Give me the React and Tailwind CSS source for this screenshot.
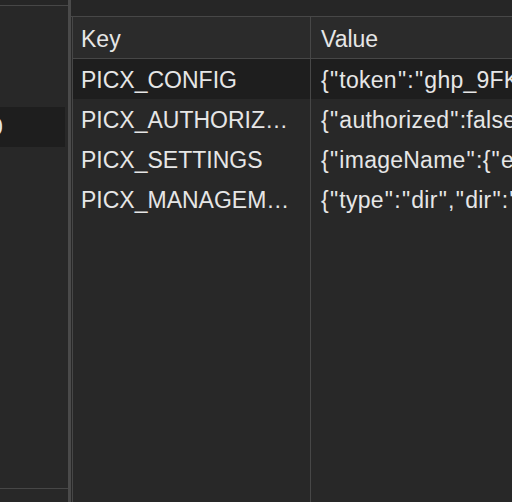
const rows = [
  { key: 'PICX_CONFIG', value: '{"token":"ghp_9FKx2mQ7cLrT0","owner":"user","repo":"picx-images"}', active: true },
  { key: 'PICX_AUTHORIZATION', value: '{"authorized":false,"token":""}' },
  { key: 'PICX_SETTINGS', value: '{"imageName":{"enableHash":true,"addPrefix":false}}' },
  { key: 'PICX_MANAGEMENT', value: '{"type":"dir","dir":"/","list":[]}' },
];

// quotes render a little wider in the original font
const JsonText = ({ text }) =>
  text.split('"').map((part, i) => (
    <span key={i}>
      {i > 0 && <span className="mx-[1px]">"</span>}
      {part}
    </span>
  ));

const App = () => {
  return (
    <div className="w-[512px] h-[502px] flex overflow-hidden bg-[#282828] text-[#e6e6e6] text-[23px] font-['Liberation_Sans',Arial,sans-serif]">
      {/* storage sidebar */}
      <div className="w-[68px] shrink-0 flex flex-col">
        <div className="h-[6px] border-b border-[#474747] bg-[#262626]" />
        <div className="mt-[101px] h-[40px] w-[65px] bg-[#1e1e1e] flex items-center overflow-hidden whitespace-nowrap">
          <span className="-ml-[10px]">0</span>
        </div>
        <div className="flex-1" />
        <div className="h-[14px] border-t border-[#474747]" />
      </div>

      <div className="w-[3px] shrink-0 bg-[#4a4a4a]" />

      {/* key / value table */}
      <div className="flex-1 min-w-0 flex flex-col">
        <div className="h-[17px] shrink-0 border-b border-[#474747] bg-[#262626]" />
        <div className="flex-1 pl-[1px] min-h-0">
          <div className="w-[760px] h-full border-l border-[#474747] flex flex-col">
            <div className="h-[42px] shrink-0 flex border-b border-[#474747] bg-[#2b2b2b]">
              <div className="w-[238px] shrink-0 border-r border-[#474747] pl-[8px] pt-[3px] flex items-center">Key</div>
              <div className="flex-1 pl-[10px] pt-[3px] flex items-center">Value</div>
            </div>
            {rows.map((row) => (
              <div key={row.key} className={`h-[40px] shrink-0 flex ${row.active ? 'bg-[#1e1e1e]' : ''}`}>
                <div className="w-[238px] shrink-0 border-r border-[#474747] pl-[8px] pr-[10px] pt-[3px] flex items-center min-w-0">
                  <span className="truncate">{row.key}</span>
                </div>
                <div className="flex-1 pl-[10px] pt-[3px] flex items-center whitespace-nowrap overflow-hidden tracking-[0.25px]">
                  <span>
                    <JsonText text={row.value} />
                  </span>
                </div>
              </div>
            ))}
            <div className="flex-1 flex">
              <div className="w-[238px] shrink-0 border-r border-[#474747]" />
            </div>
          </div>
        </div>
      </div>
    </div>
  );
};

export default App;
